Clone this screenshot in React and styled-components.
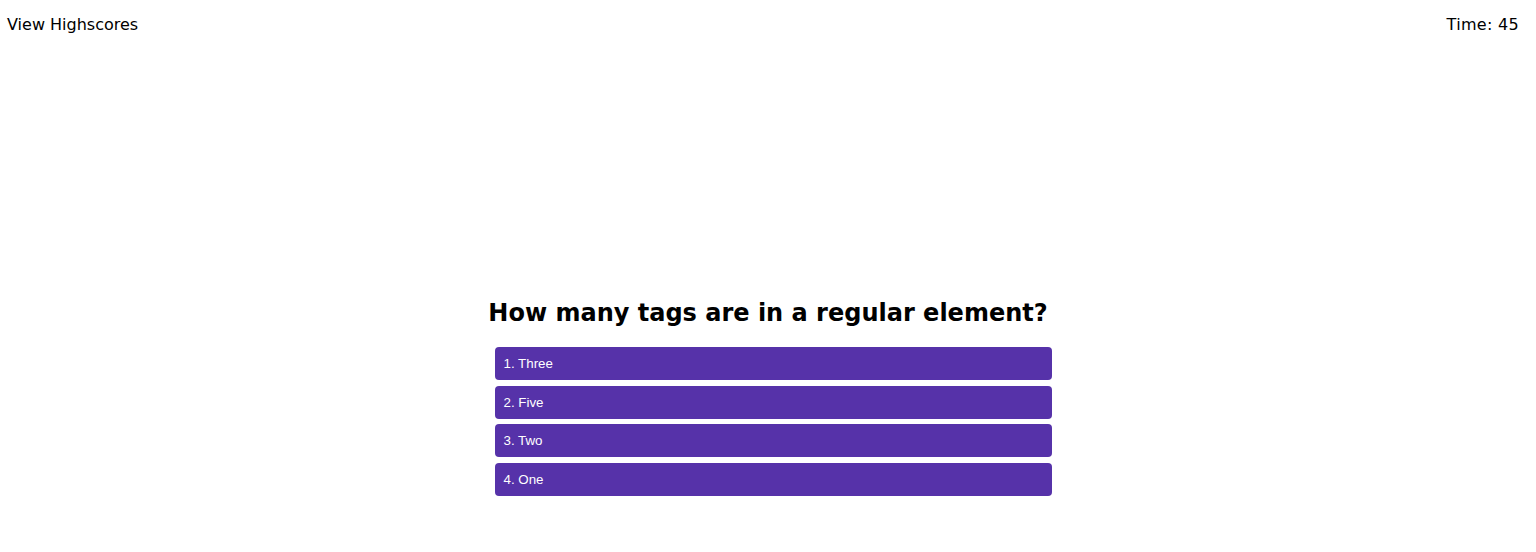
import React from "react";
import styled, { createGlobalStyle } from "styled-components";

const Global = createGlobalStyle`
  html, body { margin: 0; padding: 0; background: #fff; }
  body { font-family: "DejaVu Sans", Verdana, sans-serif; color: #000; }
`;

const Page = styled.div`
  width: 1536px;
  height: 552px;
  display: flex;
  flex-direction: column;
`;

const Header = styled.header`
  display: flex;
  justify-content: space-between;
  align-items: center;
  padding: 14px 17px 0 7px;
  font-size: 16px;
  line-height: 21px;
`;

const HeaderLink = styled.a`
  color: #000;
  text-decoration: none;
  cursor: pointer;
`;

const Timer = styled.div`
  letter-spacing: 0.3px;
`;

const Quiz = styled.main`
  width: 567px;
  margin: 262px auto 0;
  display: flex;
  flex-direction: column;
`;

const Question = styled.h2`
  margin: 0 0 18px;
  font-size: 24px;
  line-height: 32px;
  font-weight: bold;
  text-align: center;
  white-space: nowrap;
`;

const Answers = styled.div`
  display: flex;
  flex-direction: column;
  gap: 5.6px;
  padding-left: 10px;
`;

const Answer = styled.button`
  display: block;
  width: 557px;
  height: 33px;
  border: none;
  border-radius: 4px;
  background: #5632a9;
  color: #fff;
  font-family: "Liberation Sans", Arial, sans-serif;
  font-size: 13.333px;
  text-align: left;
  padding: 0 9px;
  cursor: pointer;
`;

const answers = ["1. Three", "2. Five", "3. Two", "4. One"];

export default function App() {
  return (
    <>
      <Global />
      <Page>
        <Header>
          <HeaderLink>View Highscores</HeaderLink>
          <Timer>Time: 45</Timer>
        </Header>
        <Quiz>
          <Question>How many tags are in a regular element?</Question>
          <Answers>
            {answers.map((a) => (
              <Answer key={a}>{a}</Answer>
            ))}
          </Answers>
        </Quiz>
      </Page>
    </>
  );
}
